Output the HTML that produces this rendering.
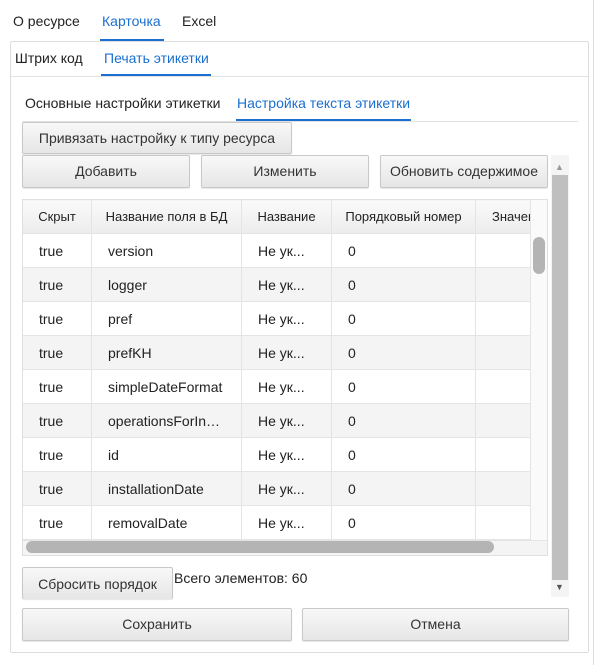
<!DOCTYPE html>
<html><head><meta charset="utf-8"><style>
*{box-sizing:border-box;margin:0;padding:0}
body{width:602px;height:665px;background:#fff;font-family:"Liberation Sans",sans-serif;font-size:14px;color:#222;position:relative;overflow:hidden}
.a{position:absolute;white-space:nowrap}
.btn{position:absolute;border:1px solid #c8c8c8;border-radius:2px;background:linear-gradient(#f8f8f8,#e6e6e6);text-align:center;font-size:14px;color:#333;box-shadow:0 1px 1px rgba(0,0,0,.1)}
.blue{color:#1a6fd0}
table{border-collapse:collapse;position:absolute;left:22px;top:199px;table-layout:fixed;width:528px}
td,th{height:34px;border:1px solid #e4e4e4;font-weight:normal;font-size:14px;padding-left:16px;text-align:left;white-space:nowrap;overflow:hidden}
th{background:linear-gradient(#fafafa,#ececec);text-align:center;padding:0;font-size:13px}
tr:nth-child(odd) td{background:#f4f4f4}
</style></head><body>
<div class="a" style="left:593px;top:0;width:1px;height:665px;background:#ddd"></div>
<div class="a" style="left:13px;top:13px">О ресурсе</div>
<div class="a blue" style="left:102px;top:13px">Карточка</div>
<div class="a" style="left:182px;top:13px">Excel</div>
<div class="a" style="left:100px;top:39px;width:64px;height:2px;background:#1a6fd0"></div>
<div class="a" style="left:10px;top:41px;width:579px;height:612px;border:1px solid #ddd;border-radius:2px"></div>
<div class="a" style="left:15px;top:50px">Штрих код</div>
<div class="a blue" style="left:104px;top:50px">Печать этикетки</div>
<div class="a" style="left:11px;top:76px;width:577px;height:1px;background:#e2e2e2"></div>
<div class="a" style="left:101px;top:74px;width:110px;height:2px;background:#1a6fd0"></div>
<div class="a" style="left:25px;top:95px">Основные настройки этикетки</div>
<div class="a blue" style="left:237px;top:95px">Настройка текста этикетки</div>
<div class="a" style="left:22px;top:121px;width:556px;height:1px;background:#e2e2e2"></div>
<div class="a" style="left:236px;top:119px;width:175px;height:2px;background:#1a6fd0"></div>
<div class="btn" style="left:22px;top:122px;width:270px;height:32px;line-height:30px">Привязать настройку к типу ресурса</div>
<div class="btn" style="left:22px;top:155px;width:168px;height:33px;line-height:31px">Добавить</div>
<div class="btn" style="left:201px;top:155px;width:168px;height:33px;line-height:31px">Изменить</div>
<div class="btn" style="left:380px;top:155px;width:168px;height:33px;line-height:31px;overflow:hidden">Обновить содержимое</div>
<div class="a" style="left:551px;top:155px;width:18px;height:442px;background:#f4f4f4"></div>
<div class="a" style="left:552px;top:175px;width:16px;height:405px;background:#bfbfbf"></div>
<div class="a" style="left:555px;top:162px;font-size:9px;color:#999">▲</div>
<div class="a" style="left:555px;top:582px;font-size:9px;color:#555">▼</div>
<div class="a" style="left:22px;top:199px;width:526px;height:357px;border:1px solid #e0e0e0;overflow:hidden;background:#fff">
<table style="left:-1px;top:-1px">
<colgroup><col style="width:69px"><col style="width:150px"><col style="width:90px"><col style="width:144px"><col style="width:55px"><col style="width:20px"></colgroup>
<tr><th>Скрыт</th><th>Название поля в БД</th><th>Название</th><th>Порядковый номер</th><th style="text-align:left;padding-left:16px">Значение</th><th></th></tr>
<tr><td>true</td><td>version</td><td>Не ук...</td><td>0</td><td></td><td></td></tr>
<tr><td>true</td><td>logger</td><td>Не ук...</td><td>0</td><td></td><td></td></tr>
<tr><td>true</td><td>pref</td><td>Не ук...</td><td>0</td><td></td><td></td></tr>
<tr><td>true</td><td>prefKH</td><td>Не ук...</td><td>0</td><td></td><td></td></tr>
<tr><td>true</td><td>simpleDateFormat</td><td>Не ук...</td><td>0</td><td></td><td></td></tr>
<tr><td>true</td><td>operationsForIn…</td><td>Не ук...</td><td>0</td><td></td><td></td></tr>
<tr><td>true</td><td>id</td><td>Не ук...</td><td>0</td><td></td><td></td></tr>
<tr><td>true</td><td>installationDate</td><td>Не ук...</td><td>0</td><td></td><td></td></tr>
<tr><td>true</td><td>removalDate</td><td>Не ук...</td><td>0</td><td></td><td></td></tr>
</table>
<div class="a" style="left:0;top:340px;width:526px;height:17px;background:#f4f4f4;border-top:1px solid #e4e4e4"></div>
<div class="a" style="left:3px;top:341px;width:468px;height:12px;border-radius:6px;background:#b4b4b4"></div>
<div class="a" style="left:507px;top:0;width:19px;height:340px;background:#fafafa;border-left:1px solid #e4e4e4"></div>
<div class="a" style="left:510px;top:37px;width:12px;height:37px;border-radius:6px;background:#b4b4b4"></div>
</div>
<div class="btn" style="left:22px;top:567px;width:151px;height:32px;line-height:32px;border-bottom:none">Сбросить порядок</div>
<div class="a" style="left:174px;top:570px">Всего элементов: 60</div>
<div class="btn" style="left:22px;top:608px;width:270px;height:33px;line-height:31px">Сохранить</div>
<div class="btn" style="left:302px;top:608px;width:267px;height:33px;line-height:31px">Отмена</div>
</body></html>
